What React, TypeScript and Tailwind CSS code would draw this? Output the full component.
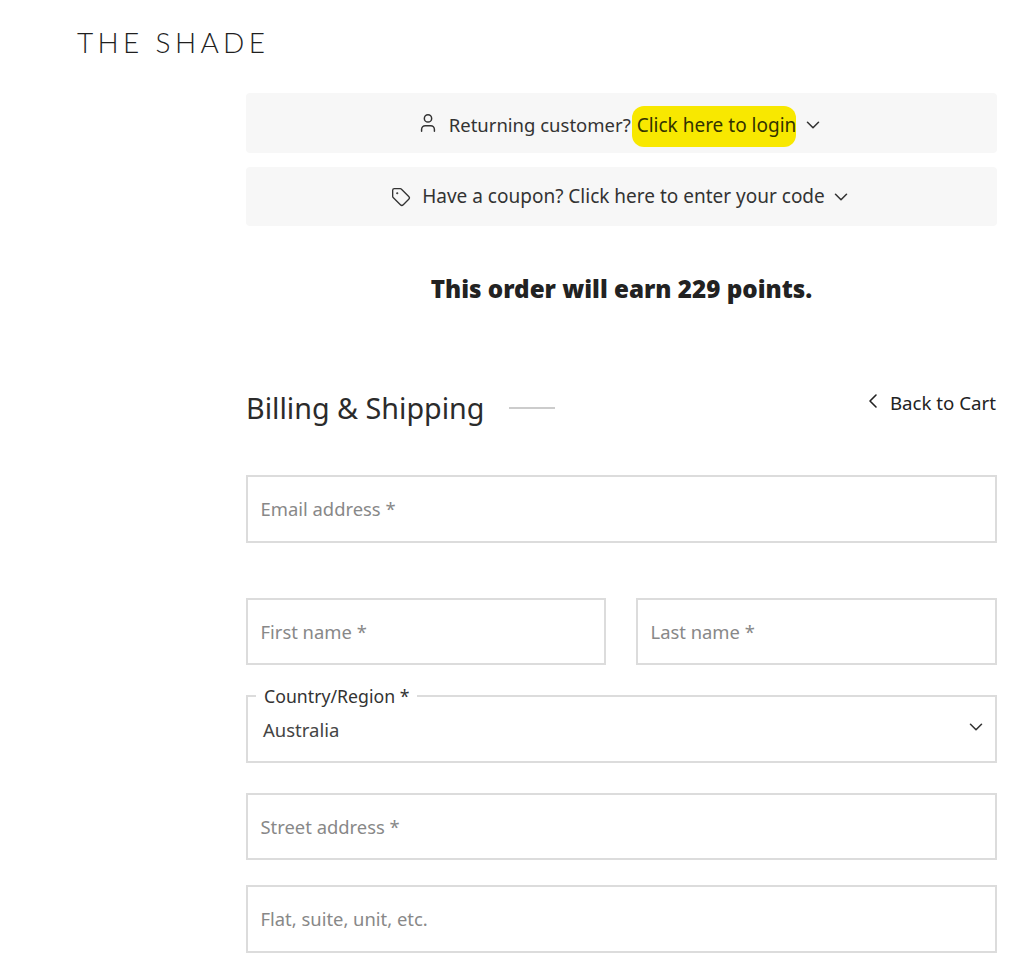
import React from 'react';
import { ChevronDown, ChevronLeft, Tag, User } from 'lucide-react';

const Field = ({ label, height = 'h-[68px]', className = '' }: { label: string; height?: string; className?: string }) => (
  <div className={`flex items-center border-2 border-[#dcdcdc] pl-[12.5px] text-[18.4px] text-[#888888] ${height} ${className}`}>
    {label}
  </div>
);

const App: React.FC = () => {
  return (
    <div className="h-[953px] overflow-hidden bg-white font-['Noto_Sans',sans-serif] text-[#333333]">
      <header className="pl-[77px] pt-[24px]">
        <div className="font-['Lato',sans-serif] text-[28px] font-light leading-[36px] tracking-[4.35px] text-[#1f1f1f]">THE SHADE</div>
      </header>

      <main className="ml-[246px] mr-[19px] mt-[33px]">
        <div className="flex h-[60px] items-center justify-center rounded bg-[#f7f7f7] pr-[2px] pt-[3px] text-[18.5px]">
          <User className="mr-[10px] h-[22px] w-[22px] -translate-y-[2px]" strokeWidth={1.6} />
          <span>Returning customer?</span>
          <span className="ml-[1px] flex h-[41px] translate-y-[2px] items-center rounded-[12px] bg-[#f8e800] pb-[2px] pl-[5px] text-[19px] text-[#333300]">Click here to login</span>
          <ChevronDown className="ml-[6px] h-[22px] w-[22px]" strokeWidth={1.7} />
        </div>

        <div className="mt-[14px] flex h-[59px] items-center justify-center rounded bg-[#f7f7f7] text-[19px]">
          <Tag className="mr-[11px] h-[20px] w-[20px]" strokeWidth={1.6} />
          <span>Have a coupon? Click here to enter your code</span>
          <ChevronDown className="ml-[5px] h-[22px] w-[22px]" strokeWidth={1.7} />
        </div>

        <p className="mt-[43px] text-center text-[24.2px] font-black leading-[40px] text-[#222222]">This order will earn 229 points.</p>

        <div className="mt-[77px] flex items-start justify-between">
          <div className="flex items-center">
            <h2 className="text-[28.7px] leading-[44px] text-[#2b2b2b]">Billing &amp; Shipping</h2>
            <span className="ml-[25px] h-[2px] w-[46px] bg-[#cccccc]" />
          </div>
          <div className="flex items-center pr-[1px] pt-[3px] text-[18.7px] leading-[28px] text-[#222222]">
            <ChevronLeft className="-mt-[4px] mr-[5px] h-[24px] w-[24px]" strokeWidth={1.6} />
            Back to Cart
          </div>
        </div>

        <Field label="Email address *" className="mt-[45px]" />

        <div className="mt-[55px] grid grid-cols-[360px_361px] gap-[30px]">
          <Field label="First name *" height="h-[67px]" />
          <Field label="Last name *" height="h-[67px]" />
        </div>

        <div className="relative mt-[30px] flex h-[68px] items-center justify-between border-2 border-[#dcdcdc] pl-[15px] pr-[8px] pt-[2px] text-[18.5px]">
          <span className="absolute left-[8px] top-[-13px] bg-white px-[8px] text-[17.7px] leading-[24px]">Country/Region *</span>
          <span className="text-[#444444]">Australia</span>
          <ChevronDown className="-mt-[7px] h-[22px] w-[22px]" strokeWidth={1.7} />
        </div>

        <Field label="Street address *" height="h-[67px]" className="mt-[30px]" />
        <Field label="Flat, suite, unit, etc." className="mt-[25px]" />
      </main>
    </div>
  );
};

export default App;
